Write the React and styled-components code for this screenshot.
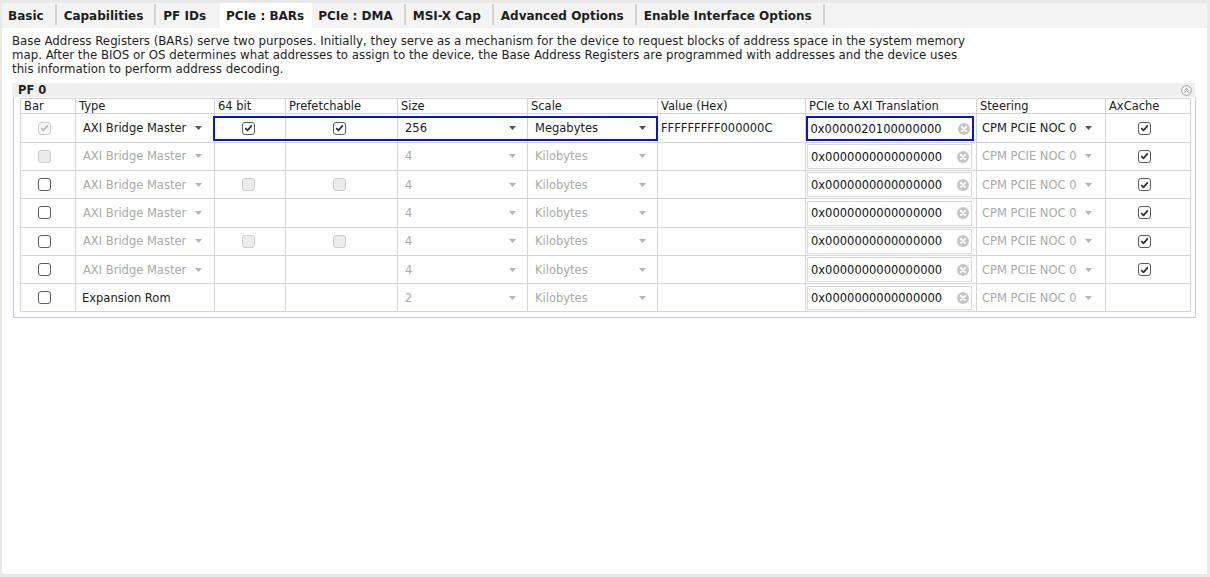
import { createGlobalStyle, styled } from "styled-components";

const COLS = [55, 139, 71, 112, 130, 130, 148, 171, 129, 85];
const GRID = COLS.map((w) => `${w}px`).join(" ");
const BLUE = "#0016e8";
const LINE = "#d4d4d4";

const GlobalStyle = createGlobalStyle`
  html, body {
    margin: 0;
    padding: 0;
  }
  body {
    background: #e9e9e9;
    font-family: "DejaVu Sans", Verdana, sans-serif;
    color: #1b1b1b;
  }
  * {
    box-sizing: border-box;
  }
`;

const Window = styled.div`
  width: 1210px;
  height: 577px;
  padding: 3px 3px 3px 2px;
  background: #e9e9e9;
  display: flex;
  flex-direction: column;
`;

const TabBar = styled.div`
  display: flex;
  height: 25px;
  background: #f3f3f3;
`;

const Tab = styled.div`
  display: flex;
  align-items: center;
  padding: 0 ${(p) => (p.$active ? 8 : 11)}px 0 6px;
  font-size: 12px;
  font-weight: bold;
  color: #1e1e1e;
  white-space: nowrap;
  background: ${(p) => (p.$active ? "#ffffff" : "transparent")};
`;

const Divider = styled.div`
  width: 2px;
  margin: 1px 1px 3px 0;
  background: ${(p) => (p.$hidden ? "transparent" : "#d3d3d3")};
`;

const Panel = styled.div`
  flex: 1;
  background: #ffffff;
  padding: 7px 12px 0 10px;
`;

const Description = styled.p`
  margin: 0;
  font-size: 11.8px;
  line-height: 13.8px;
  white-space: nowrap;
  color: #1e1e1e;

  span {
    display: block;
  }
`;

const SectionHead = styled.div`
  margin-top: 7px;
  height: 14px;
  background: #efefef;
  display: flex;
  align-items: center;
  justify-content: space-between;
  padding: 0 3px 0 6px;
  font-size: 11.5px;
  font-weight: bold;
  color: #222;
`;

const Frame = styled.div`
  margin: 0 -1px 0 1px;
  border: 1px solid #c6cbd9;
  border-top: none;
  padding: 1px 4px 5px 6px;
`;

const Table = styled.div`
  width: ${COLS.reduce((a, b) => a + b, 0) + 1}px;
  border-left: 1px solid ${LINE};
  border-top: 1px solid ${LINE};
  font-size: 11.5px;
`;

const HeadRow = styled.div`
  display: grid;
  grid-template-columns: ${GRID};
  height: 15px;
  border-bottom: 1px solid ${LINE};
`;

const HeadCell = styled.div`
  display: flex;
  align-items: center;
  padding-left: 3px;
  border-right: 1px solid ${LINE};
  white-space: nowrap;
  color: #202020;
`;

const Row = styled.div`
  position: relative;
  display: grid;
  grid-template-columns: ${GRID};
  height: 28.3px;
  border-bottom: 1px solid ${LINE};
`;

const Cell = styled.div`
  display: flex;
  align-items: center;
  justify-content: ${(p) => (p.$center ? "center" : "flex-start")};
  padding: 0 ${(p) => p.$shift || 0}px 0 ${(p) => p.$pad || 0}px;
  border-right: 1px solid ${LINE};
  white-space: nowrap;
  min-width: 0;
  color: ${(p) => (p.$muted ? "#a9a9a9" : "#1b1b1b")};
`;

const Highlight = styled.div`
  position: absolute;
  top: 1.5px;
  bottom: 0.5px;
  border: 2.5px solid ${BLUE};
  pointer-events: none;
`;

const Select = styled.div`
  flex: 1;
  display: flex;
  align-items: center;
  justify-content: space-between;
  padding: 0 ${(p) => p.$arrowGap || 11}px 0 ${(p) => p.$pad || 7}px;
  color: ${(p) => (p.$muted ? "#a9a9a9" : "#1b1b1b")};
`;

const Field = styled.div`
  flex: 1;
  align-self: stretch;
  display: flex;
  align-items: center;
  justify-content: space-between;
  margin: ${(p) => (p.$focused ? "1.5px 2px 0.5px 0" : "1.5px 4px 1px 1px")};
  border: ${(p) => (p.$focused ? `2.5px solid ${BLUE}` : "1px solid #d9d9d9")};
  padding: 0 ${(p) => (p.$focused ? 2.5 : 2)}px 0 ${(p) => (p.$focused ? 2.5 : 3)}px;
  color: #111;
`;

const Box = styled.span`
  width: 13px;
  height: 13px;
  border-radius: 3px;
  display: inline-flex;
  align-items: center;
  justify-content: center;
  border: 1px solid ${(p) => (p.$disabled ? "#cdcdcd" : "#5c5c5c")};
  background: ${(p) => (p.$disabled ? (p.$checked ? "#f5f5f5" : "#ebebeb") : "#ffffff")};
`;

const Arrow = ({ muted }) => (
  <svg width="7" height="4" viewBox="0 0 7 4">
    <polygon points="0,0 7,0 3.5,4" fill={muted ? "#b4b4b4" : "#555"} />
  </svg>
);

const ClearIcon = () => (
  <svg width="12" height="12" viewBox="0 0 12 12">
    <circle cx="6" cy="6" r="6" fill="#c6c6c6" />
    <path d="M3.8 3.8 L8.2 8.2 M8.2 3.8 L3.8 8.2" stroke="#fff" strokeWidth="1.8" strokeLinecap="round" />
  </svg>
);

const CollapseIcon = () => (
  <svg width="11" height="11" viewBox="0 0 11 11">
    <circle cx="5.5" cy="5.5" r="4.8" fill="#f7f7f7" stroke="#9d9d9d" strokeWidth="1" />
    <path d="M3.5 5.3 L5.5 3.4 L7.5 5.3 M3.5 7.6 L5.5 5.7 L7.5 7.6" fill="none" stroke="#8a8a8a" strokeWidth="1" />
  </svg>
);

const Checkbox = ({ checked, disabled }) => (
  <Box $checked={checked} $disabled={disabled}>
    {checked && (
      <svg width="9" height="8" viewBox="0 0 9 8">
        <path
          d="M1.2 4.2 L3.5 6.4 L7.8 1.4"
          fill="none"
          stroke={disabled ? "#b8b8b8" : "#2e2e2e"}
          strokeWidth="1.7"
          strokeLinejoin="round"
        />
      </svg>
    )}
  </Box>
);

const tabs = [
  "Basic",
  "Capabilities",
  "PF IDs",
  "PCIe : BARs",
  "PCIe : DMA",
  "MSI-X Cap",
  "Advanced Options",
  "Enable Interface Options",
];
const ACTIVE = 3;

const headers = [
  "Bar",
  "Type",
  "64 bit",
  "Prefetchable",
  "Size",
  "Scale",
  "Value (Hex)",
  "PCIe to AXI Translation",
  "Steering",
  "AxCache",
];

const ZERO = "0x0000000000000000";

const rows = [
  {
    bar: "lockedOn",
    type: "AXI Bridge Master",
    typeOn: true,
    bits: "on",
    pre: "on",
    size: "256",
    scale: "Megabytes",
    on: true,
    value: "FFFFFFFFF000000C",
    trans: "0x0000020100000000",
    cache: true,
    focus: true,
  },
  { bar: "locked", type: "AXI Bridge Master", size: "4", scale: "Kilobytes", trans: ZERO, cache: true },
  { bar: "off", type: "AXI Bridge Master", bits: "locked", pre: "locked", size: "4", scale: "Kilobytes", trans: ZERO, cache: true },
  { bar: "off", type: "AXI Bridge Master", size: "4", scale: "Kilobytes", trans: ZERO, cache: true },
  { bar: "off", type: "AXI Bridge Master", bits: "locked", pre: "locked", size: "4", scale: "Kilobytes", trans: ZERO, cache: true },
  { bar: "off", type: "AXI Bridge Master", size: "4", scale: "Kilobytes", trans: ZERO, cache: true },
  { bar: "off", type: "Expansion Rom", typeOn: true, plain: true, size: "2", scale: "Kilobytes", trans: ZERO },
];

const colStart = (i) => COLS.slice(0, i).reduce((a, b) => a + b, 0);

const renderBox = (state) => {
  if (!state) return null;
  if (state === "on") return <Checkbox checked />;
  if (state === "lockedOn") return <Checkbox checked disabled />;
  if (state === "locked") return <Checkbox disabled />;
  return <Checkbox />;
};

const BarRow = ({ row }) => (
  <Row>
    <Cell $center $shift={8}>{renderBox(row.bar)}</Cell>
    <Cell>
      {row.plain ? (
        <Select $pad={6}>{row.type}</Select>
      ) : (
        <Select $muted={!row.typeOn} $arrowGap={12}>
          {row.type}
          <Arrow muted={!row.typeOn} />
        </Select>
      )}
    </Cell>
    <Cell $center $shift={3}>{renderBox(row.bits)}</Cell>
    <Cell $center $shift={4}>{renderBox(row.pre)}</Cell>
    <Cell>
      <Select $muted={!row.on}>
        {row.size}
        <Arrow muted={!row.on} />
      </Select>
    </Cell>
    <Cell>
      <Select $muted={!row.on}>
        {row.scale}
        <Arrow muted={!row.on} />
      </Select>
    </Cell>
    <Cell $pad={3}>{row.value}</Cell>
    <Cell>
      <Field $focused={row.focus}>
        {row.trans}
        <ClearIcon />
      </Field>
    </Cell>
    <Cell>
      <Select $muted={!row.on} $pad={5} $arrowGap={13}>
        CPM PCIE NOC 0
        <Arrow muted={!row.on} />
      </Select>
    </Cell>
    <Cell $center $shift={7}>{row.cache && <Checkbox checked />}</Cell>
    {row.focus && (
      <Highlight style={{ left: colStart(2) - 2, width: colStart(6) - colStart(2) + 2 }} />
    )}
  </Row>
);

const App = () => (
  <>
    <GlobalStyle />
    <Window>
      <TabBar>
        {tabs.map((t, i) => (
          <>
            <Tab key={t} $active={i === ACTIVE}>
              {t}
            </Tab>
            {i !== ACTIVE && <Divider key={t + "-d"} $hidden={i + 1 === ACTIVE} />}
          </>
        ))}
      </TabBar>
      <Panel>
        <Description>
          <span>
            Base Address Registers (BARs) serve two purposes. Initially, they serve as a mechanism for the device to
            request blocks of address space in the system memory
          </span>
          <span>
            map. After the BIOS or OS determines what addresses to assign to the device, the Base Address Registers are
            programmed with addresses and the device uses
          </span>
          <span>this information to perform address decoding.</span>
        </Description>
        <SectionHead>
          PF 0
          <CollapseIcon />
        </SectionHead>
        <Frame>
          <Table>
            <HeadRow>
              {headers.map((h) => (
                <HeadCell key={h}>{h}</HeadCell>
              ))}
            </HeadRow>
            {rows.map((r, i) => (
              <BarRow key={i} row={r} />
            ))}
          </Table>
        </Frame>
      </Panel>
    </Window>
  </>
);

export default App;
